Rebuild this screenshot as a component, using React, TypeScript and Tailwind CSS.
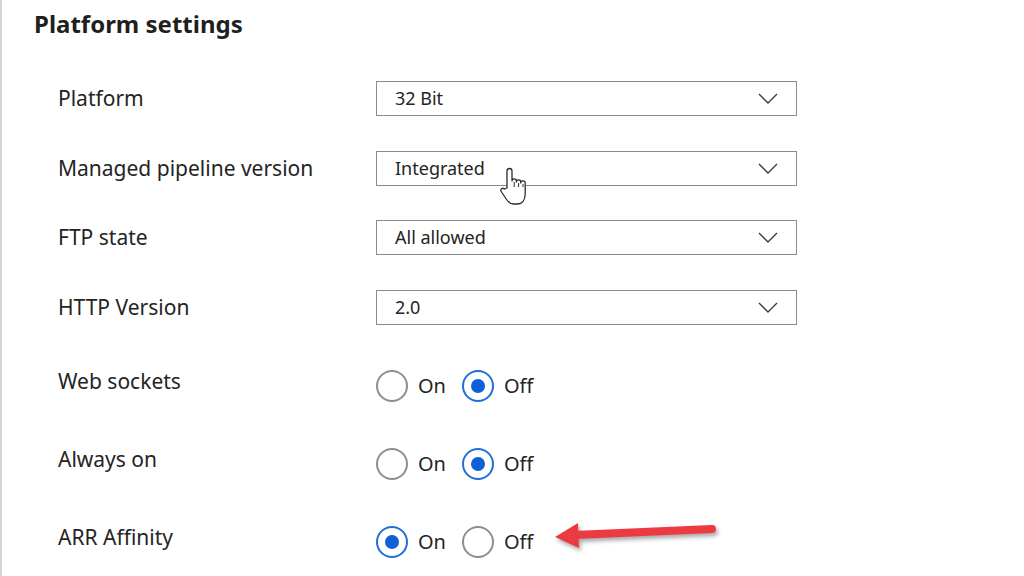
import React from 'react';

type DropRow = { label: string; value: string };
type RadioRow = { label: string; on: boolean };

const dropdowns: DropRow[] = [
  { label: 'Platform', value: '32 Bit' },
  { label: 'Managed pipeline version', value: 'Integrated' },
  { label: 'FTP state', value: 'All allowed' },
  { label: 'HTTP Version', value: '2.0' },
];

const radios: RadioRow[] = [
  { label: 'Web sockets', on: false },
  { label: 'Always on', on: false },
  { label: 'ARR Affinity', on: true },
];

const Chevron = () => (
  <svg width="20" height="11" viewBox="0 0 20 11" fill="none">
    <polyline points="1,1 10,10 19,1" stroke="#3a3a3a" strokeWidth="1.4" />
  </svg>
);

const Radio: React.FC<{ checked: boolean; label: string }> = ({ checked, label }) => (
  <div className="flex items-center gap-[10px]">
    <span
      className={
        checked
          ? 'w-[32px] h-[32px] rounded-full border-2 border-[#1f6fd9] flex items-center justify-center'
          : 'w-[32px] h-[32px] rounded-full border-2 border-[#8e8e8e]'
      }
    >
      {checked && <span className="w-[14px] h-[14px] rounded-full bg-[#0f60d6]" />}
    </span>
    <span className="text-[20px]">{label}</span>
  </div>
);

const HandCursor = () => (
  <svg width="36" height="46" viewBox="0 0 36 46" fill="none">
    <path
      d="M9 23 V6 a2.5 2.5 0 0 1 5 0 V16 a2.2 2.2 0 0 1 4.4 0 V17 a2.2 2.2 0 0 1 4.4 0 V18 a2.2 2.2 0 0 1 4.4 0 V29 c0 6 -3 10 -8 10 h-4 c-3 0 -5 -2 -7 -5 l-5 -7.5 a2 2 0 0 1 3.2 -2.5 z"
      fill="#ffffff"
      stroke="#2e2e2e"
      strokeWidth="1.3"
      strokeLinejoin="round"
    />
    <line x1="16.2" y1="17" x2="16.2" y2="22" stroke="#2e2e2e" strokeWidth="1" />
    <line x1="20.6" y1="18" x2="20.6" y2="22" stroke="#2e2e2e" strokeWidth="1" />
    <line x1="25" y1="19" x2="25" y2="22" stroke="#2e2e2e" strokeWidth="1" />
  </svg>
);

const Arrow = () => (
  <svg width="176" height="48" viewBox="0 0 176 48" fill="none" className="drop-shadow-[2px_3px_2px_rgba(0,0,0,0.35)]">
    <line x1="24" y1="23" x2="162" y2="17" stroke="#ec3b40" strokeWidth="8" strokeLinecap="round" />
    <polygon points="5,25 28,11 29,36" fill="#ec3b40" />
  </svg>
);

export default function App() {
  return (
    <div className="relative w-[1024px] h-[576px] overflow-hidden bg-white border-l-2 border-[#d4d4d4] text-[#242424] font-['Noto_Sans','Open_Sans',sans-serif]">
      <div className="h-[64px] pl-[32px] pt-[6px]">
        <h2 className="text-[24px] font-bold leading-[36px] text-[#1f1f1f]">Platform settings</h2>
      </div>

      <div className="pl-[56px]">
        {dropdowns.map((d) => (
          <div key={d.label} className="flex items-center h-[69.5px]">
            <div className="w-[318px] text-[21px]">{d.label}</div>
            <div className="w-[421px] h-[35px] border-[1.5px] border-[#8c8c8c] flex items-center justify-between pl-[18px] pr-[18px]">
              <span className="text-[18px]">{d.value}</span>
              <Chevron />
            </div>
          </div>
        ))}

        <div className="mt-[5px]">
          {radios.map((r) => (
            <div key={r.label} className="flex items-center h-[78px]">
              <div className="w-[318px] text-[21px] pb-[8px]">{r.label}</div>
              <div className="flex items-center gap-[16px]">
                <Radio checked={r.on} label="On" />
                <Radio checked={!r.on} label="Off" />
              </div>
            </div>
          ))}
        </div>
      </div>

      <div className="absolute left-[496px] top-[165px]">
        <HandCursor />
      </div>
      <div className="absolute left-[548px] top-[512px]">
        <Arrow />
      </div>
    </div>
  );
}
